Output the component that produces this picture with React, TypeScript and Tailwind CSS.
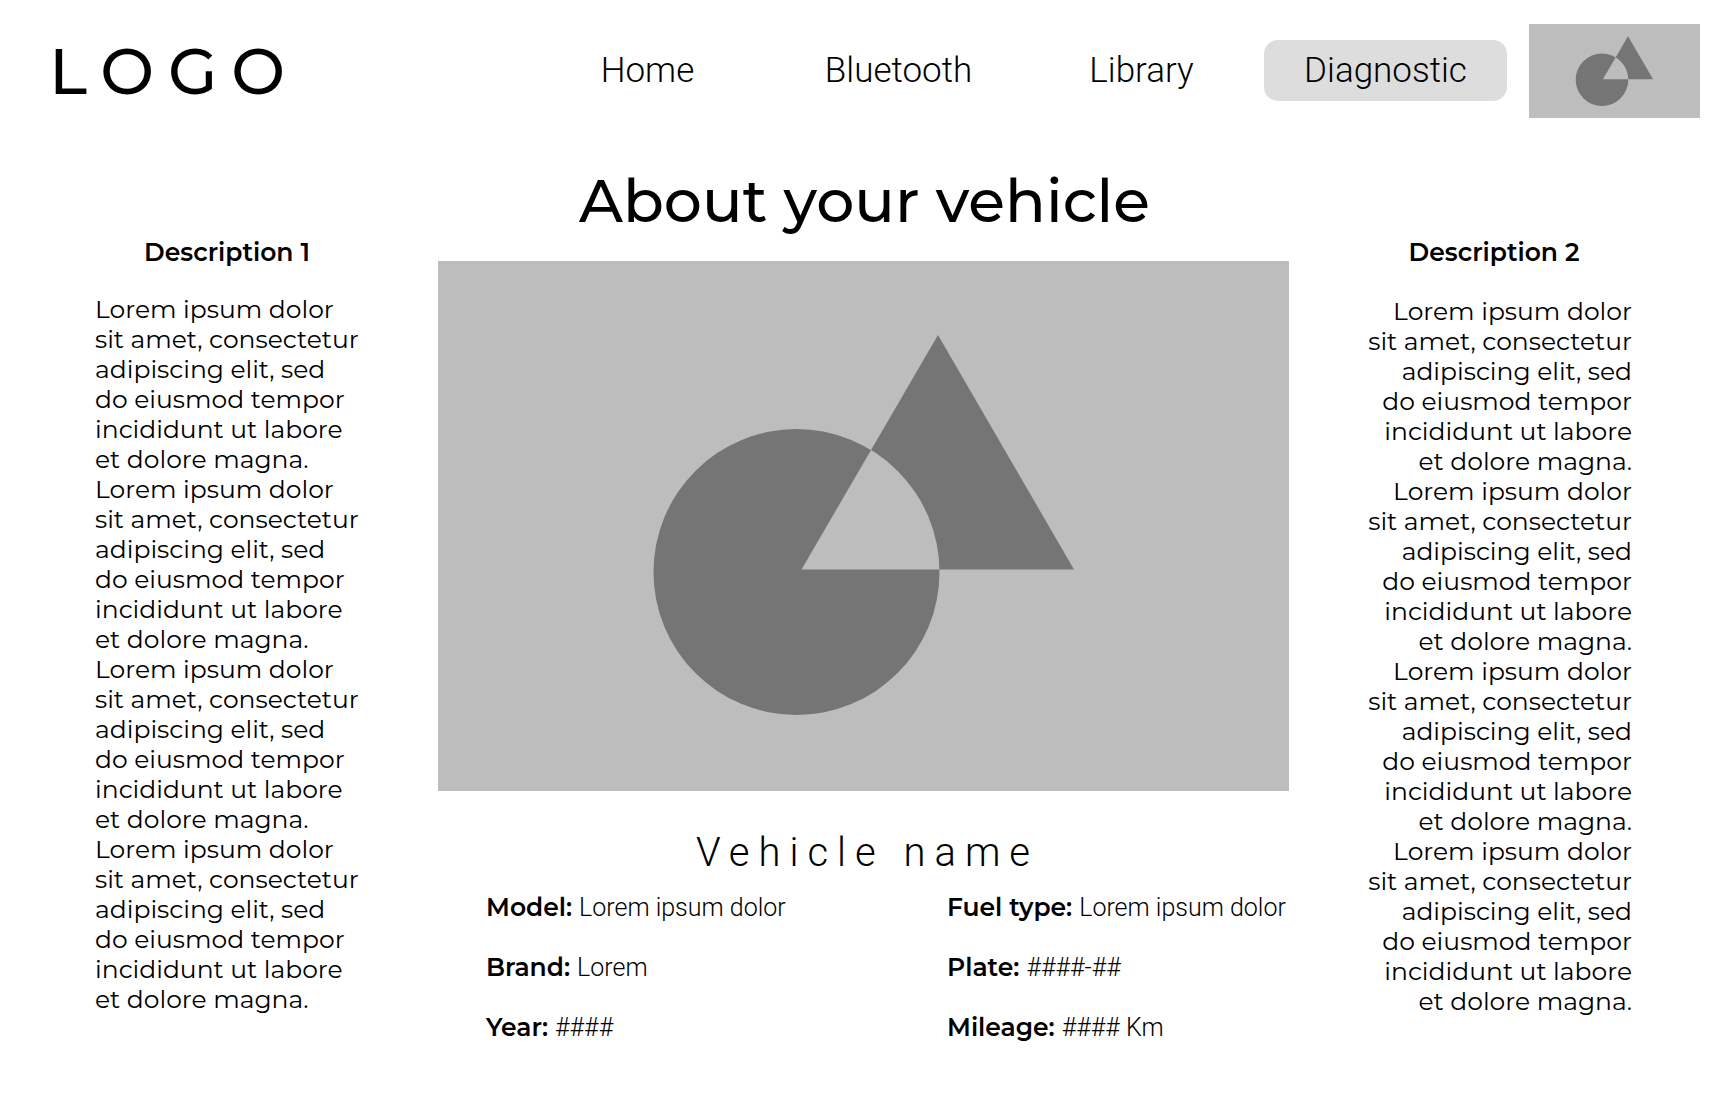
const verse = [
  'Lorem ipsum dolor',
  'sit amet, consectetur',
  'adipiscing elit, sed',
  'do eiusmod tempor',
  'incididunt ut labore',
  'et dolore magna.',
];

const paragraphs = [0, 1, 2, 3];

const navItems = [
  { label: 'Home', active: false },
  { label: 'Bluetooth', active: false },
  { label: 'Library', active: false },
  { label: 'Diagnostic', active: true },
];

const specs = [
  [
    { label: 'Model:', value: 'Lorem ipsum dolor' },
    { label: 'Brand:', value: 'Lorem' },
    { label: 'Year:', value: '####' },
  ],
  [
    { label: 'Fuel type:', value: 'Lorem ipsum dolor' },
    { label: 'Plate:', value: '####-##' },
    { label: 'Mileage:', value: '#### Km' },
  ],
];

function Placeholder({ viewBox, label, className }: { viewBox: string; label: string; className: string }) {
  return (
    <svg viewBox={viewBox} role="img" aria-label={label} className={className}>
      <path
        fill="#757575"
        fillRule="evenodd"
        d="M215.5 311a143 143 0 1 0 286 0a143 143 0 1 0 -286 0ZM500 74L636 308.5H363.5Z"
      />
    </svg>
  );
}

function Verses() {
  return (
    <>
      {paragraphs.map((p) => (
        <p key={p}>
          {verse.map((line) => (
            <span key={line} className="block whitespace-nowrap">
              {line}
            </span>
          ))}
        </p>
      ))}
    </>
  );
}

export default function App() {
  return (
    <div className="min-h-screen bg-white font-[Montserrat,Inter,sans-serif] text-black">
      <header className="flex items-center justify-between pt-6 pr-7 pl-[49px]">
        <a href="#" className="text-[64px] leading-[94px] font-medium tracking-[14px]">
          LOGO
        </a>
        <div className="flex items-start gap-[22px]">
          <nav className="flex items-center pt-4 font-[Roboto,sans-serif] text-[35px] font-light">
            {navItems.map((item) => (
              <a
                key={item.label}
                href="#"
                aria-current={item.active ? 'page' : undefined}
                className={
                  item.active
                    ? 'ml-px flex h-[61px] w-[243px] items-center justify-center rounded-[14px] bg-[#dddddd] pt-0.5'
                    : 'flex h-[61px] w-[243px] items-center justify-center pt-0.5 first:mr-2'
                }
              >
                {item.label}
              </a>
            ))}
          </nav>
          <Placeholder viewBox="-38 8 929 511" label="Profile" className="h-[94px] w-[171px] bg-[#bdbdbd]" />
        </div>
      </header>

      <main className="grid grid-cols-[438fr_851fr_439fr] pt-[47px]">
        <section className="flex justify-center pt-[72px] pl-4 text-[25px] leading-[30px]">
          <div className="w-[264px]">
            <h2 className="mb-[27px] text-center font-semibold">Description 1</h2>
            <Verses />
          </div>
        </section>

        <section>
          <h1 className="mb-6 pl-0.5 text-center text-[60px] leading-[72px] font-medium whitespace-nowrap">
            About your vehicle
          </h1>
          <Placeholder viewBox="0 0 851 530" label="Vehicle" className="w-full bg-[#bdbdbd]" />
          <h2 className="mt-[38px] pl-2 text-center font-[Roboto,sans-serif] text-[40px] leading-[48px] font-light tracking-[9px]">
            Vehicle name
          </h2>
          <div className="mt-[15px] grid grid-cols-[461fr_342fr] pl-12 text-[25px] leading-[30px]">
            {specs.map((column, i) => (
              <dl key={i} className="flex flex-col gap-[29px]">
                {column.map((spec) => (
                  <div key={spec.label} className="flex items-baseline gap-[7px] whitespace-nowrap">
                    <dt className="font-semibold">{spec.label}</dt>
                    <dd className="font-[Roboto,sans-serif] font-light">{spec.value}</dd>
                  </div>
                ))}
              </dl>
            ))}
          </div>
        </section>

        <section className="flex justify-end pt-[72px] pr-24 text-[25px] leading-[30px]">
          <div className="w-[264px] text-right">
            <h2 className="mb-[29px] pr-3 text-center font-semibold">Description 2</h2>
            <Verses />
          </div>
        </section>
      </main>
    </div>
  );
}
